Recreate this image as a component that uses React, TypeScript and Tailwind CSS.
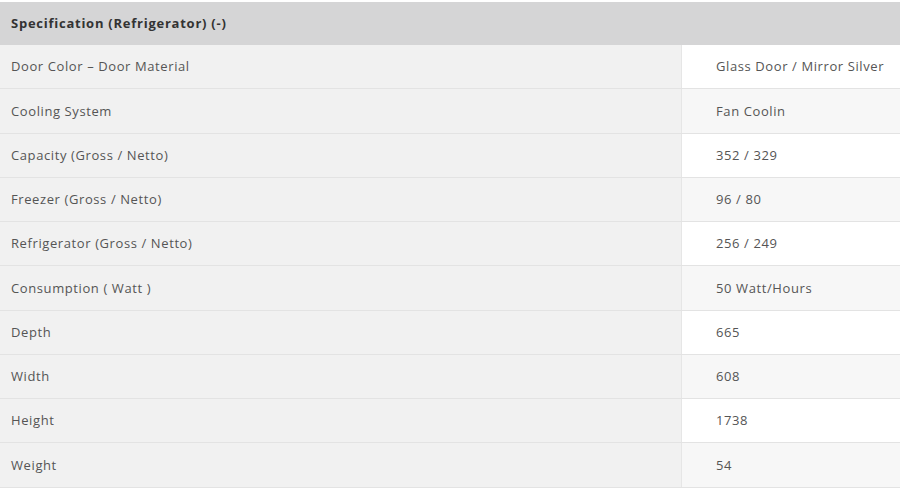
const rows: [string, string][] = [
  ['Door Color – Door Material', 'Glass Door / Mirror Silver'],
  ['Cooling System', 'Fan Coolin'],
  ['Capacity (Gross / Netto)', '352 / 329'],
  ['Freezer (Gross / Netto)', '96 / 80'],
  ['Refrigerator (Gross / Netto)', '256 / 249'],
  ['Consumption ( Watt )', '50 Watt/Hours'],
  ['Depth', '665'],
  ['Width', '608'],
  ['Height', '1738'],
  ['Weight', '54'],
];

export default function App() {
  return (
    <div
      className="w-[900px] h-[489px] bg-white pt-[2px] overflow-hidden"
      style={{ fontFamily: '"Open Sans", "Noto Sans", sans-serif' }}
    >
      {/* Header */}
      <div className="h-[43px] bg-[#d5d5d6] flex items-center pl-[11px] text-[13px] font-bold tracking-[0.75px] text-[#333]">
        Specification (Refrigerator) (-)
      </div>

      {/* Rows */}
      {rows.map(([label, value], i) => (
        <div key={label} className="flex h-[44.25px] border-b border-[#e3e3e3] box-border text-[13px] tracking-[0.6px] text-[#555]">
          <div className="w-[682px] bg-[#f1f1f1] border-r border-[#e6e6e6] flex items-center pl-[11px] pt-px">
            {label}
          </div>
          <div className={i % 2 === 0 ? 'flex-1 bg-white flex items-center pl-[34px] pt-px' : 'flex-1 bg-[#f7f7f7] flex items-center pl-[34px] pt-px'}>
            {value}
          </div>
        </div>
      ))}
    </div>
  );
}
